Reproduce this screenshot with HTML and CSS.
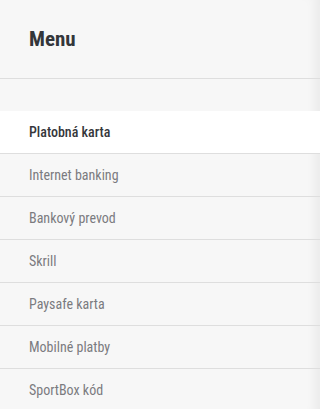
FILE: index.html
```html
<!DOCTYPE html>
<html lang="sk">
<head>
<meta charset="utf-8">
<link rel="stylesheet" href="styles.css">
</head>
<body>
<aside class="sidebar">
  <header class="sidebar-head">
    <h1 class="title">Menu</h1>
  </header>
  <nav class="menu">
    <a class="item active">Platobná karta</a>
    <a class="item">Internet banking</a>
    <a class="item">Bankový prevod</a>
    <a class="item">Skrill</a>
    <a class="item">Paysafe karta</a>
    <a class="item">Mobilné platby</a>
    <a class="item">SportBox kód</a>
  </nav>
</aside>
</body>
</html>
```
FILE: styles.css
```css
html, body {
  margin: 0;
  padding: 0;
  height: 100%;
}
body {
  background: #f7f7f7;
  font-family: Roboto, "Noto Sans", sans-serif;
  font-stretch: 80%;
}
.sidebar {
  position: relative;
  min-height: 100%;
  background: #f7f7f7;
  box-shadow: inset -12px 0 12px -8px rgba(0,0,0,0.06);
}
.sidebar-head {
  height: 78px;
  border-bottom: 1px solid #dedede;
  display: flex;
  align-items: center;
  padding-left: 29px;
}
.title {
  margin: 0;
  font-size: 21px;
  font-weight: 700;
  color: #33363a;
  line-height: 1;
}
.menu {
  display: flex;
  flex-direction: column;
  padding-top: 32px;
}
.item {
  display: flex;
  align-items: center;
  height: 42px;
  padding-left: 29px;
  border-bottom: 1px solid #dedede;
  font-size: 14px;
  font-weight: 400;
  color: #7b7b7f;
}
.item.active {
  background: #fff;
  color: #35373b;
  font-weight: 500;
}
```
